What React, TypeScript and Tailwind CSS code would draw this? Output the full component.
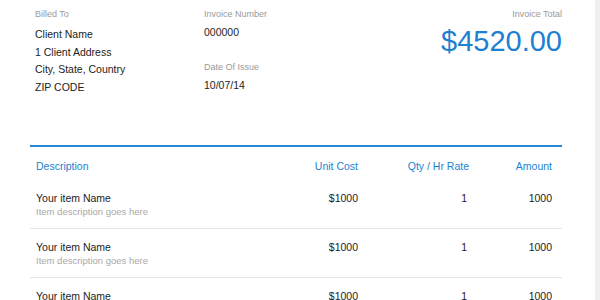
import React from "react";

const items = [
  { name: "Your item Name", desc: "Item description goes here", cost: "$1000", qty: "1", amount: "1000" },
  { name: "Your item Name", desc: "Item description goes here", cost: "$1000", qty: "1", amount: "1000" },
  { name: "Your item Name", desc: "Item description goes here", cost: "$1000", qty: "1", amount: "1000" },
];

const App = () => {
  return (
    <div className="flex h-[300px] w-[600px] overflow-hidden bg-white font-['Liberation_Sans',Arial,sans-serif] text-[#222]">
      <div className="w-[595px] shrink-0 bg-white pl-[30px] pr-[33px]">
        {/* Top info */}
        <div className="flex pl-[5px] pt-[8px]">
          <div className="w-[169px]">
            <p className="text-[9px] leading-[12px] text-[#9a9a9a]">Billed To</p>
            <div className="mt-[6px] text-[10.5px] leading-[17.5px]">
              <p>Client Name</p>
              <p>1 Client Address</p>
              <p>City, State, Country</p>
              <p>ZIP CODE</p>
            </div>
          </div>
          <div className="flex-1">
            <p className="text-[9px] leading-[12px] text-[#9a9a9a]">Invoice Number</p>
            <p className="mt-[4px] text-[10.5px] leading-[17.5px]">000000</p>
            <p className="mt-[19px] text-[9px] leading-[12px] text-[#9a9a9a]">Date Of Issue</p>
            <p className="mt-[4px] text-[10.5px] leading-[17.5px]">10/07/14</p>
          </div>
          <div className="text-right">
            <p className="text-[9px] leading-[12px] text-[#9a9a9a]">Invoice Total</p>
            <p className="mt-[7px] text-[29px] leading-[29px] text-[#1e80d0]">$4520.00</p>
          </div>
        </div>

        {/* Table */}
        <div className="mt-[49px] border-t-2 border-[#2a87d3]">
          <div className="grid grid-cols-[1fr_90px_111px_83px] pl-[6px] pr-[10px] pt-[12px] pb-[7px] text-[10.5px] leading-[14px] text-[#2183d0]">
            <span>Description</span>
            <span className="text-right">Unit Cost</span>
            <span className="text-right">Qty / Hr Rate</span>
            <span className="text-right">Amount</span>
          </div>
          {items.map((item, i) => (
            <div
              key={i}
              className="grid grid-cols-[1fr_90px_111px_83px] border-b border-[#e6e6e6] pl-[6px] pr-[10px] pt-[11px] pb-[9px] text-[10.5px] leading-[14px]"
            >
              <div>
                <p>{item.name}</p>
                <p className="text-[9.5px] text-[#a8a8a8]">{item.desc}</p>
              </div>
              <span className="text-right">{item.cost}</span>
              <span className="pr-[2px] text-right">{item.qty}</span>
              <span className="text-right">{item.amount}</span>
            </div>
          ))}
        </div>
      </div>
      <div className="flex-1 bg-[#f0f0f0]" />
    </div>
  );
};

export default App;
